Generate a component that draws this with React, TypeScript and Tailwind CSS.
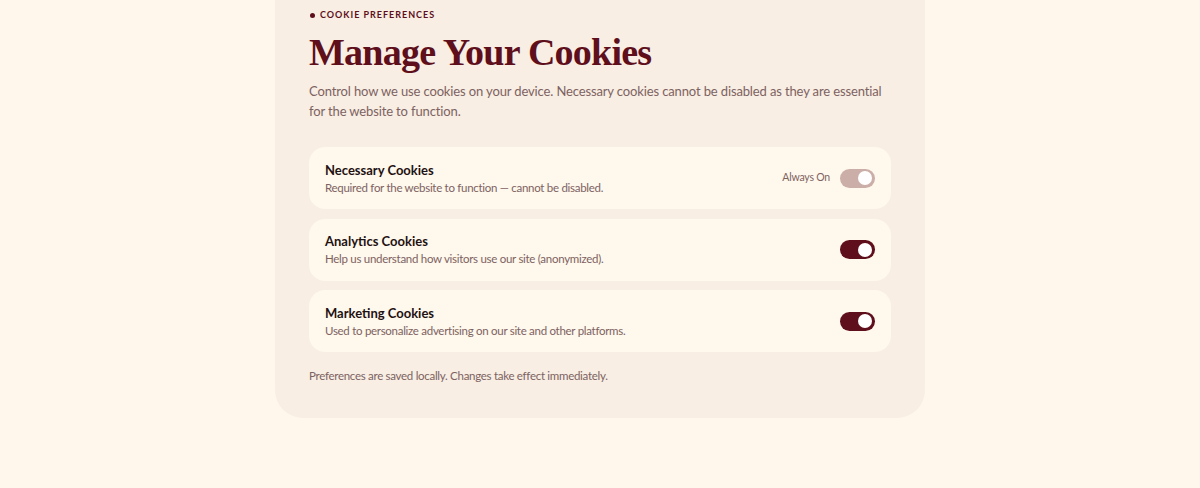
import React, { useState } from "react";

type Pref = {
  key: string;
  title: string;
  desc: string;
  locked?: boolean;
};

const prefs: Pref[] = [
  { key: "necessary", title: "Necessary Cookies", desc: "Required for the website to function — cannot be disabled.", locked: true },
  { key: "analytics", title: "Analytics Cookies", desc: "Help us understand how visitors use our site (anonymized)." },
  { key: "marketing", title: "Marketing Cookies", desc: "Used to personalize advertising on our site and other platforms." },
];

const Toggle: React.FC<{ on: boolean; locked?: boolean; onClick?: () => void }> = ({ on, locked, onClick }) => (
  <button
    type="button"
    onClick={onClick}
    disabled={locked}
    className={
      "relative flex h-[19px] w-[35px] items-center rounded-full px-[3px] " +
      (locked ? "bg-[#ccaea8] " : on ? "bg-[#5e0f1b] " : "bg-[#d9c9bf] ") +
      (on ? "justify-end" : "justify-start")
    }
  >
    <span className="block h-[14px] w-[14px] rounded-full bg-white" />
  </button>
);

export default function App() {
  const [state, setState] = useState<Record<string, boolean>>({ necessary: true, analytics: true, marketing: true });

  return (
    <div className="min-h-[488px] w-full bg-[#fff7eb] font-['Lato',sans-serif]">
      <div className="mx-auto w-[650px] rounded-b-[28px] bg-[#f8eee3] px-[34px] pt-[10px] pb-[34px]">
        <div className="flex items-center gap-[5px] text-[9px] font-bold uppercase leading-[10px] tracking-[0.11em] text-[#5e0f1b]">
          <span className="ml-[1px] block h-[5px] w-[5px] rounded-full bg-[#5e0f1b]" />
          Cookie Preferences
        </div>

        <h1 className="mt-[9px] font-['Liberation_Serif',serif] text-[38px] font-bold leading-[46px] tracking-[-0.02em] text-[#5e0f1b]">
          Manage Your Cookies
        </h1>

        <p className="mt-[6px] text-[13px] leading-[20px] tracking-[-0.01em] text-[#7d6262]">
          Control how we use cookies on your device. Necessary cookies cannot be disabled as they are essential for the website to function.
        </p>

        <div className="mt-[26px] flex flex-col gap-[9.5px]">
          {prefs.map((p) => (
            <div key={p.key} className="flex h-[62px] items-center justify-between rounded-[16px] bg-[#fff8ec] px-[16px]">
              <div className="flex flex-col">
                <div className="text-[13px] font-bold leading-[18px] text-[#1f1212]">{p.title}</div>
                <div className="mt-[1px] text-[11.5px] leading-[16px] tracking-[-0.025em] text-[#7d6262]">{p.desc}</div>
              </div>
              <div className="flex items-center gap-[10px]">
                {p.locked && <span className="text-[10.5px] tracking-[-0.02em] text-[#7d6262]">Always On</span>}
                <Toggle
                  on={state[p.key]}
                  locked={p.locked}
                  onClick={() => setState((s) => ({ ...s, [p.key]: !s[p.key] }))}
                />
              </div>
            </div>
          ))}
        </div>

        <p className="mt-[16px] text-[11.5px] leading-[16px] tracking-[-0.025em] text-[#7d6262]">
          Preferences are saved locally. Changes take effect immediately.
        </p>
      </div>
    </div>
  );
}
